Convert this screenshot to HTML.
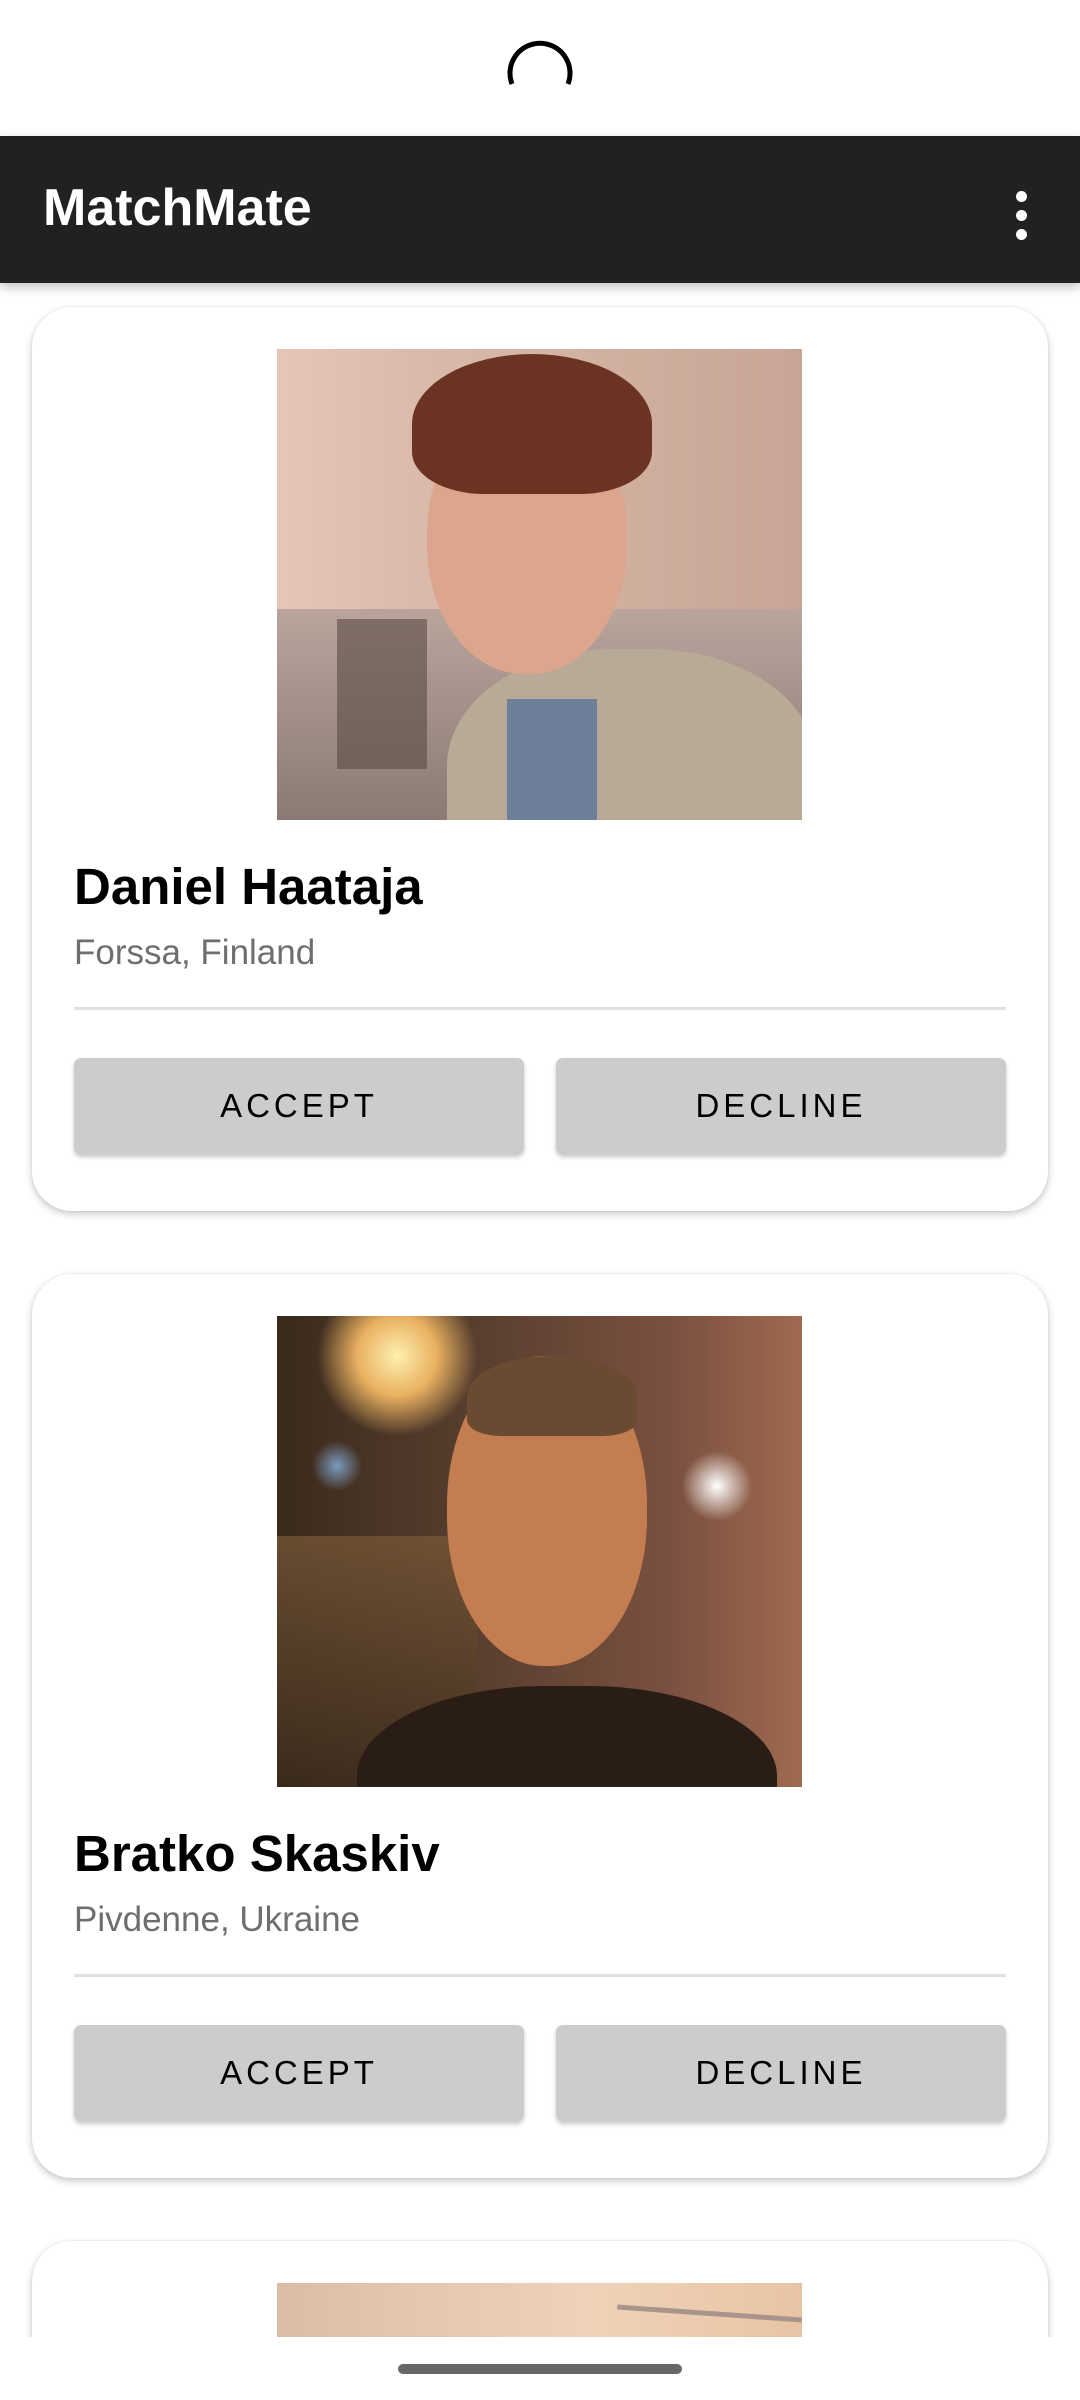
<!DOCTYPE html>
<html><head><meta charset="utf-8"><style>
*{margin:0;padding:0;box-sizing:border-box}
html,body{width:1080px;height:2400px;overflow:hidden;background:#fff}
body{font-family:"Liberation Sans",Roboto,sans-serif}
#root{position:relative;width:1080px;height:2400px;overflow:hidden;background:#fff}
.appbar{position:absolute;left:0;top:136px;width:1080px;height:147px;background:#212121;box-shadow:0 4px 10px rgba(0,0,0,.25);z-index:2}
.title{position:absolute;left:43px;top:42px;color:#fff;font-size:52px;font-weight:bold}
.dot{position:absolute;left:1016px;width:11px;height:11px;border-radius:50%;background:#fff}
.card{position:absolute;left:32px;width:1016px;height:904px;background:#fff;border-radius:40px;box-shadow:0 3px 8px rgba(0,0,0,.22),0 0 2px rgba(0,0,0,.08)}
.photo{position:absolute;left:245px;top:42px;width:525px;height:471px;overflow:hidden}
.name{position:absolute;left:42px;top:550px;font-size:51px;font-weight:bold;color:#000}
.loc{position:absolute;left:42px;top:626px;font-size:35px;color:#6e6e6e}
.div{position:absolute;left:42px;top:700px;width:932px;height:3px;background:#e0e0e0}
.btn{position:absolute;top:751px;width:450px;height:96px;background:#cccccc;border-radius:7px;box-shadow:0 3px 5px rgba(0,0,0,.22);color:#000;font-size:33px;letter-spacing:4px;text-align:center;line-height:96px}
</style></head><body><div id="root">
<svg style="position:absolute;left:502px;top:32px" width="76" height="76" viewBox="0 0 76 76"><path d="M10 52 A30 30 0 1 1 66 52" fill="none" stroke="#000" stroke-width="5"/></svg>
<div class="appbar"><div class="title">MatchMate</div><div class="dot" style="top:55px"></div><div class="dot" style="top:74px"></div><div class="dot" style="top:93px"></div></div>

<div class="card" style="top:307px">
<div class="photo" style="background:linear-gradient(90deg,#e7c6b8 0%,#d9b9aa 30%,#cfae9e 70%,#c8a596 100%)">
<div style="position:absolute;left:0;top:260px;width:525px;height:211px;background:linear-gradient(180deg,#b9a59c,#8a7a74)"></div>
<div style="position:absolute;left:60px;top:270px;width:90px;height:150px;background:#5a4a45;opacity:.6"></div>
<div style="position:absolute;left:170px;top:300px;width:370px;height:260px;border-radius:45% 45% 0 0;background:#b9aa98"></div>
<div style="position:absolute;left:230px;top:350px;width:90px;height:130px;background:#6d7f99"></div>
<div style="position:absolute;left:150px;top:55px;width:200px;height:270px;border-radius:48%;background:#dca58d"></div>
<div style="position:absolute;left:135px;top:5px;width:240px;height:140px;border-radius:50% 50% 30% 30%;background:#6b3422"></div>
</div>
<div class="name">Daniel Haataja</div>
<div class="loc">Forssa, Finland</div>
<div class="div"></div>
<div class="btn" style="left:42px">ACCEPT</div>
<div class="btn" style="left:524px">DECLINE</div>
</div>

<div class="card" style="top:1274px">
<div class="photo" style="background:radial-gradient(circle at 120px 40px,#fff0b0 0,#e8b060 40px,transparent 80px),radial-gradient(circle at 440px 170px,#fff 0,transparent 35px),radial-gradient(circle at 60px 150px,#7b9bc0 0,transparent 25px),linear-gradient(90deg,#3a2a1c,#5a4030 40%,#7a5040 75%,#a06a50)">
<div style="position:absolute;left:0;top:220px;width:200px;height:251px;background:linear-gradient(180deg,#7a5a38,#3a2a1c);opacity:.7"></div>
<div style="position:absolute;left:80px;top:370px;width:420px;height:200px;border-radius:45% 45% 0 0;background:#2a1d15"></div>
<div style="position:absolute;left:170px;top:40px;width:200px;height:310px;border-radius:48%;background:#c47d50"></div>
<div style="position:absolute;left:190px;top:40px;width:170px;height:80px;border-radius:50% 50% 20% 20%;background:#6a4a30"></div>
</div>
<div class="name">Bratko Skaskiv</div>
<div class="loc">Pivdenne, Ukraine</div>
<div class="div"></div>
<div class="btn" style="left:42px">ACCEPT</div>
<div class="btn" style="left:524px">DECLINE</div>
</div>

<div class="card" style="top:2241px;height:150px">
<div class="photo" style="background:linear-gradient(90deg,#dcbca6,#f0d2b8 60%,#e8c4a4)">
<div style="position:absolute;left:340px;top:28px;width:185px;height:5px;background:#a8948a;transform:rotate(4deg)"></div>
</div>
</div>

<div style="position:absolute;left:0;top:2337px;width:1080px;height:63px;background:#fff;z-index:3"></div>
<div style="position:absolute;left:398px;top:2364px;width:284px;height:10px;border-radius:5px;background:#666;z-index:4"></div>
</div></body></html>
